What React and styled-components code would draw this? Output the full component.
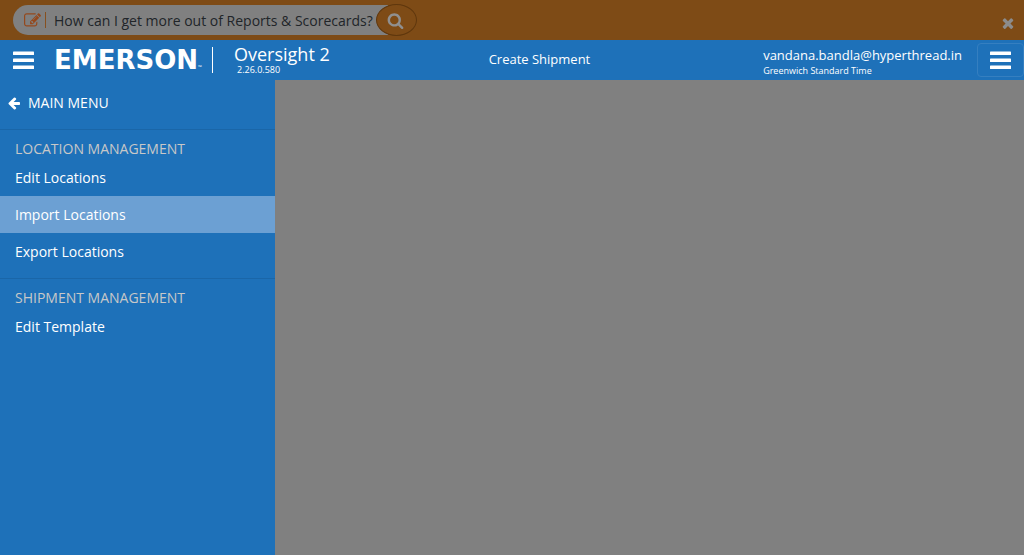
import React from "react";
import styled, { createGlobalStyle } from "styled-components";

const GlobalStyle = createGlobalStyle`
  *, *::before, *::after { box-sizing: border-box; }
  body {
    margin: 0;
    background: #808080;
    color: #fff;
    font-family: "Open Sans", "Noto Sans", sans-serif;
    font-size: 14px;
    line-height: 20px;
  }
  button, input { font: inherit; }
`;

const Page = styled.div`
  display: flex;
  flex-direction: column;
  min-height: 100vh;
`;

const AssistBar = styled.form`
  display: flex;
  align-items: center;
  justify-content: space-between;
  height: 40px;
  padding: 0 8px 0 13px;
  background: #7e4b16;
`;

const SearchGroup = styled.div`
  display: flex;
  align-items: center;
`;

const SearchField = styled.label`
  display: flex;
  align-items: center;
  width: 375px;
  height: 30px;
  margin-right: -12px;
  padding-left: 11px;
  border-radius: 15px 0 0 15px;
  background: #808080;
  color: #94481c;
`;

const FieldRule = styled.span`
  width: 1px;
  height: 16px;
  margin: 0 8px 0 4px;
  background: #87501f;
`;

const SearchInput = styled.input`
  flex: 1;
  min-width: 0;
  padding: 2px 0 0;
  border: 0;
  outline: 0;
  background: transparent;
  color: #212529;
`;

const SearchButton = styled.button`
  display: grid;
  place-items: center;
  width: 41px;
  height: 32px;
  padding: 0 3px 0 0;
  border: 1px solid #5f370d;
  border-radius: 50%;
  background: #7e4b16;
  color: #909090;
`;

const CloseButton = styled.button`
  display: grid;
  margin-top: 6px;
  padding: 0;
  border: 0;
  background: transparent;
  color: #8c8c8c;
`;

const Header = styled.header`
  display: flex;
  align-items: center;
  height: 40px;
  background: #1e71b9;
`;

const MenuButton = styled.button`
  display: grid;
  place-items: center;
  width: ${(p) => (p.$framed ? 47 : 21)}px;
  height: ${(p) => (p.$framed ? 34 : 20)}px;
  margin-left: ${(p) => (p.$framed ? 15 : 13)}px;
  padding: 0;
  border: ${(p) => (p.$framed ? "1px solid #357fc0" : "0")};
  border-radius: 4px;
  background: transparent;
  color: #fff;
`;

const Logo = styled.div`
  display: flex;
  align-items: flex-end;
  width: 159px;
  margin-left: 20px;
  border-right: 1px solid #fff;
  font: bold 26px/26px "DejaVu Sans", sans-serif;
`;

const Trademark = styled.span`
  font: 5px/12px "Open Sans", sans-serif;
`;

const Product = styled.div`
  margin-left: 21px;
`;

const ProductName = styled.div`
  font-size: 18px;
  line-height: 20px;
`;

const Version = styled.div`
  padding-left: 3px;
  font-size: 9px;
  line-height: 12px;
`;

const Title = styled.h1`
  flex: 1;
  margin: 0;
  padding-bottom: 2px;
  font-size: 13px;
  font-weight: 400;
  text-align: center;
`;

const Account = styled.div`
  margin-left: 14px;
  padding-top: 3px;
  font-size: 13px;
  line-height: 18px;
`;

const TimeZone = styled.div`
  font-size: 9px;
  line-height: 13px;
`;

const Content = styled.div`
  display: flex;
  flex: 1;
`;

const Sidebar = styled.nav`
  width: 275px;
  background: #1e71b9;
`;

const BackButton = styled.button`
  display: flex;
  align-items: center;
  gap: 7px;
  width: 100%;
  height: 49px;
  padding: 0 7px 3px;
  border: 0;
  background: transparent;
  color: #fff;
`;

const Section = styled.section`
  padding: 9px 0 8px;
  border-top: 1px solid #1a66a8;
`;

const SectionTitle = styled.h2`
  margin: 0;
  padding: 0 15px;
  color: #c8c8c8;
  font-size: 14px;
  font-weight: 400;
`;

const MenuList = styled.ul`
  margin: 0;
  padding: 0;
  list-style: none;
`;

const MenuLink = styled.a`
  display: block;
  padding: 9px 15px 8px;
  background: ${(p) => (p.$active ? "#6ca0d3" : "transparent")};
  color: #fff;
  text-decoration: none;
`;

const paths = {
  edit: "M888 1184l116-116-152-152-116 116v56h96v96h56zm440-720q-16-16-33 1l-350 350q-17 17-1 33t33-1l350-350q17-17 1-33zm80 594v190q0 119-84.5 203.5t-203.5 84.5h-832q-119 0-203.5-84.5t-84.5-203.5v-832q0-119 84.5-203.5t203.5-84.5h832q63 0 117 25 15 7 18 23 3 17-9 29l-49 49q-14 14-32 8-23-6-45-6h-832q-66 0-113 47t-47 113v832q0 66 47 113t113 47h832q66 0 113-47t47-113v-126q0-13 9-22l64-64q15-15 35-7t20 29zm-96-738l288 288-672 672h-288v-288zm444 132l-92 92-288-288 92-92q28-28 68-28t68 28l152 152q28 28 28 68t-28 68z",
  search: "M1216 832q0-185-131.5-316.5t-316.5-131.5-316.5 131.5-131.5 316.5 131.5 316.5 316.5 131.5 316.5-131.5 131.5-316.5zm512 832q0 52-38 90t-90 38q-54 0-90-38l-343-342q-179 124-399 124-143 0-273.5-55.5t-225-150-150-225-55.5-273.5 55.5-273.5 150-225 225-150 273.5-55.5 273.5 55.5 225 150 150 225 55.5 273.5q0 220-124 399l343 343q37 37 37 90z",
  back: "M1664 896v128q0 53-32.5 90.5t-84.5 37.5h-704l293 294q38 36 38 90t-38 90l-75 76q-37 37-90 37-52 0-91-37l-651-652q-37-37-37-90 0-52 37-91l651-650q38-38 91-38 52 0 90 38l75 74q38 38 38 91t-38 91l-293 293h704q52 0 84.5 37.5t32.5 90.5z",
  close: "M1490 1322q0 40-28 68l-136 136q-28 28-68 28t-68-28l-294-294-294 294q-28 28-68 28t-68-28l-136-136q-28-28-28-68t28-68l294-294-294-294q-28-28-28-68t28-68l136-136q28-28 68-28t68 28l294 294 294-294q28-28 68-28t68 28l136 136q28 28 28 68t-28 68l-294 294 294 294q28 28 28 68z",
};

function Icon({ name, size }) {
  return (
    <svg width={size} height={size} viewBox="0 0 1792 1792" fill="currentColor" aria-hidden="true">
      <path d={paths[name]} />
    </svg>
  );
}

function Bars() {
  return (
    <svg width="21" height="18" viewBox="0 0 21 18" fill="currentColor" aria-hidden="true">
      <rect y="0.6" width="21" height="3.4" rx="0.6" />
      <rect y="7.6" width="21" height="3.4" rx="0.6" />
      <rect y="14.4" width="21" height="3.6" rx="0.6" />
    </svg>
  );
}

const sections = [
  { title: "LOCATION MANAGEMENT", items: ["Edit Locations", "Import Locations", "Export Locations"] },
  { title: "SHIPMENT MANAGEMENT", items: ["Edit Template"] },
];

export default function App() {
  return (
    <Page>
      <GlobalStyle />
      <AssistBar onSubmit={(e) => e.preventDefault()}>
        <SearchGroup>
          <SearchField>
            <Icon name="edit" size={17} />
            <FieldRule />
            <SearchInput
              type="text"
              aria-label="Ask a question"
              defaultValue="How can I get more out of Reports & Scorecards?"
            />
          </SearchField>
          <SearchButton aria-label="Search">
            <Icon name="search" size={17} />
          </SearchButton>
        </SearchGroup>
        <CloseButton type="button" aria-label="Close">
          <Icon name="close" size={16} />
        </CloseButton>
      </AssistBar>
      <Header>
        <MenuButton type="button" aria-label="Main menu">
          <Bars />
        </MenuButton>
        <Logo>
          EMERSON<Trademark>™</Trademark>
        </Logo>
        <Product>
          <ProductName>Oversight 2</ProductName>
          <Version>2.26.0.580</Version>
        </Product>
        <Title>Create Shipment</Title>
        <Account>
          vandana.bandla@hyperthread.in
          <TimeZone>Greenwich Standard Time</TimeZone>
        </Account>
        <MenuButton type="button" aria-label="Account menu" $framed>
          <Bars />
        </MenuButton>
      </Header>
      <Content>
        <Sidebar>
          <BackButton type="button">
            <Icon name="back" size={14} />
            MAIN MENU
          </BackButton>
          {sections.map((section) => (
            <Section key={section.title}>
              <SectionTitle>{section.title}</SectionTitle>
              <MenuList>
                {section.items.map((item) => (
                  <li key={item}>
                    <MenuLink href="#" $active={item === "Import Locations"}>
                      {item}
                    </MenuLink>
                  </li>
                ))}
              </MenuList>
            </Section>
          ))}
        </Sidebar>
      </Content>
    </Page>
  );
}
